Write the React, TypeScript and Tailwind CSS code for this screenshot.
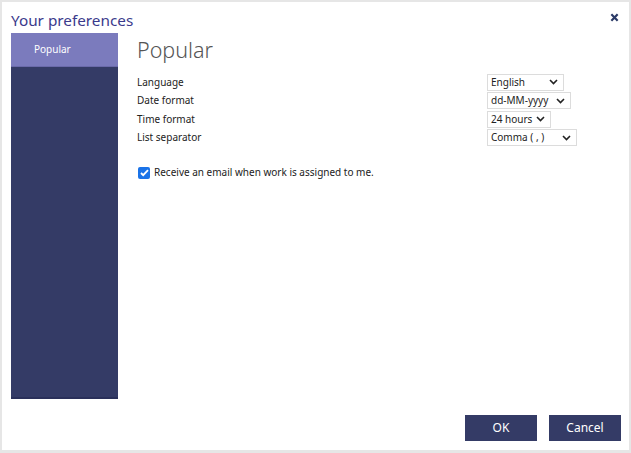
import React from "react";

const rows = [
  { label: "Language", value: "English", w: "w-[77px]" },
  { label: "Date format", value: "dd-MM-yyyy", w: "w-[84px]" },
  { label: "Time format", value: "24 hours", w: "w-[64px]" },
  { label: "List separator", value: "Comma ( , )", w: "w-[90px]" },
];

function Chevron() {
  return (
    <svg width="9" height="6" viewBox="0 0 9 6" className="shrink-0">
      <path d="M1 1l3.5 3.5L8 1" fill="none" stroke="#222" strokeWidth="1.6" />
    </svg>
  );
}

export default function App() {
  return (
    <div
      className="w-[631px] h-[453px] bg-[#e6e6e6] pl-[2px] pt-[2px] pr-[2px] pb-[3px] text-[#222]"
      style={{ fontFamily: '"Noto Sans", "Open Sans", sans-serif' }}
    >
      <div className="relative flex h-full flex-col bg-white">
        {/* Header */}
        <div className="flex h-[31px] items-end px-[9px]">
          <h1 className="text-[15.3px] leading-none text-[#3b3a8c] pb-[5px]">Your preferences</h1>
        </div>
        <button className="absolute right-[10px] top-[11px] text-[#2b3a67]">
          <svg width="9" height="9" viewBox="0 0 10 10">
            <path d="M1.5 1.5l7 7M8.5 1.5l-7 7" stroke="#2b3a67" strokeWidth="2.4" />
          </svg>
        </button>

        {/* Body */}
        <div className="flex flex-1 gap-[19px] px-[9px]">
          <nav className="flex w-[107px] flex-col bg-[#343b66] h-[366px] border-b-2 border-[#2a305a]">
            <div className="flex h-[34px] items-center bg-[#7b7bbd] pl-[23px] text-[10px] text-white border-b border-[#6a6aaa]">
              Popular
            </div>
          </nav>

          <div className="flex flex-1 flex-col">
            <h2 className="mt-[3px] text-[21.5px] font-light leading-[28px] text-[#555]">Popular</h2>
            <div className="mt-[9px] grid grid-cols-[350px_auto] text-[10px]">
              {rows.map((r) => (
                <React.Fragment key={r.label}>
                  <div className="flex h-[18.5px] items-center">{r.label}</div>
                  <div className="flex h-[18.5px] items-center">
                    <div
                      className={`flex h-[17px] ${r.w} items-center justify-between border border-[#dcdcdc] pl-[3px] pr-[5px] text-[10px]`}
                    >
                      <span className="whitespace-nowrap">{r.value}</span>
                      <Chevron />
                    </div>
                  </div>
                </React.Fragment>
              ))}
            </div>
            <label className="mt-[18px] flex items-center gap-[4px] text-[10px]">
              <span className="ml-[1px] flex h-[12px] w-[12px] items-center justify-center rounded-[2px] bg-[#1a73e8]">
                <svg width="9" height="8" viewBox="0 0 9 8">
                  <path d="M1 4l2.2 2.2L8 1.2" fill="none" stroke="white" strokeWidth="1.8" />
                </svg>
              </span>
              Receive an email when work is assigned to me.
            </label>
          </div>
        </div>

        {/* Footer */}
        <div className="flex justify-end gap-[12px] pr-[8px] pb-[9px]">
          <button className="h-[26px] w-[72px] bg-[#343b66] text-[12px] text-white">OK</button>
          <button className="h-[26px] w-[72px] bg-[#343b66] text-[12px] text-white">Cancel</button>
        </div>
      </div>
    </div>
  );
}
